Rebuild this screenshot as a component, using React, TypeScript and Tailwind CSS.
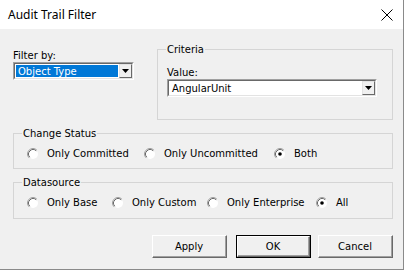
import React from 'react';

function Radio({ checked }: { checked?: boolean }) {
  return (
    <svg width="12" height="12" viewBox="0 0 12 12" className="shrink-0">
      <circle cx="6" cy="6" r="5" fill="#ffffff" />
      <path d="M2.11 9.89 A5.5 5.5 0 0 1 9.89 2.11" fill="none" stroke="#a0a0a0" />
      <path d="M2.82 9.18 A4.5 4.5 0 0 1 9.18 2.82" fill="none" stroke="#696969" />
      {checked && <circle cx="6" cy="6" r="1.8" fill="#000000" />}
    </svg>
  );
}

function RadioItem({ label, checked, width }: { label: string; checked?: boolean; width: string }) {
  return (
    <label className={`flex items-center gap-[8px] leading-[13px] ${width}`}>
      <Radio checked={checked} />
      <span>{label}</span>
    </label>
  );
}

function Group({ title, className, children }: { title: string; className?: string; children: React.ReactNode }) {
  return (
    <fieldset className={`border border-[#d5d5d5] ${className ?? ''}`}>
      <legend className="ml-[8px] px-[1px] leading-[13px]">{title}</legend>
      {children}
    </fieldset>
  );
}

function ComboArrow() {
  return (
    <div className="w-[13px] h-full flex items-center justify-center bg-[#f0f0f0] border-t border-l border-[#e3e3e3] border-r-[#696969] border-b-[#696969] border-r border-b">
      <svg width="7" height="4" viewBox="0 0 7 4">
        <path d="M0 0 H7 L3.5 4 Z" fill="#000" />
      </svg>
    </div>
  );
}

function Combo({ value, selected, width }: { value: string; selected?: boolean; width: string }) {
  return (
    <div className={`h-[18px] ${width} border-t border-l border-[#a0a0a0] border-r-white border-b-white border-r border-b`}>
      <div className="h-full flex border-t border-l border-[#696969] border-r-[#e3e3e3] border-b-[#e3e3e3] border-r border-b bg-white">
        <div className="flex-1 flex items-center p-[1px]">
          <div className={`flex-1 h-full flex items-center px-[2px] ${selected ? 'bg-[#0078d7] text-white' : ''}`}>
            {value}
          </div>
        </div>
        <ComboArrow />
      </div>
    </div>
  );
}

function Button({ label, isDefault }: { label: string; isDefault?: boolean }) {
  return (
    <div className={`w-[75px] h-[23px] ${isDefault ? 'border border-black' : ''}`}>
      <div className="h-full border-t border-l border-white border-r-[#696969] border-b-[#696969] border-r border-b">
        <div className="h-full flex items-center justify-center bg-[#f0f0f0] border-r border-b border-[#a0a0a0]">
          {label}
        </div>
      </div>
    </div>
  );
}

export default function App() {
  return (
    <div className="w-[407px] h-[271px] bg-white overflow-hidden">
      <div className="w-[404px] h-[270px] flex flex-col border-r border-b border-[#8a8a8a] font-['DejaVu_Sans',sans-serif] text-[10px] text-black">
        <div className="h-[29px] bg-white flex items-center justify-between pl-[8px] pr-[10px]">
          <span className="font-['Noto_Sans',sans-serif] text-[12px]">Audit Trail Filter</span>
          <svg width="12" height="12" viewBox="0 0 12 12">
            <path d="M0.5 0.5 L11.5 11.5 M11.5 0.5 L0.5 11.5" stroke="#000" strokeWidth="1" />
          </svg>
        </div>

        <div className="flex-1 bg-[#f0f0f0] pl-[13px] pr-[10px] pt-[14px]">
          <div className="flex">
            <div className="w-[144px] pt-[6px]">
              <div className="leading-[13px]">Filter by:</div>
              <Combo value="Object Type" selected width="w-[121px]" />
            </div>
            <Group title="Criteria" className="w-[236px] h-[77px]">
              <div className="pl-[9px] pr-[15px] pt-[10px]">
                <div className="leading-[13px]">Value:</div>
                <Combo value="AngularUnit" width="w-full" />
              </div>
            </Group>
          </div>

          <Group title="Change Status" className="w-[380px] mt-[7px]">
            <div className="flex pl-[13px] pt-[7px] pb-[8px]">
              <RadioItem label="Only Committed" width="w-[117px]" />
              <RadioItem label="Only Uncommitted" width="w-[130px]" />
              <RadioItem label="Both" checked width="w-[80px]" />
            </div>
          </Group>

          <Group title="Datasource" className="w-[380px] mt-[7px]">
            <div className="flex pl-[13px] pt-[7px] pb-[9px]">
              <RadioItem label="Only Base" width="w-[85px]" />
              <RadioItem label="Only Custom" width="w-[95px]" />
              <RadioItem label="Only Enterprise" width="w-[109px]" />
              <RadioItem label="All" checked width="w-[50px]" />
            </div>
          </Group>

          <div className="flex mt-[16px] pl-[139px]">
            <Button label="Apply" />
            <div className="ml-[9px]">
              <Button label="OK" isDefault />
            </div>
            <div className="ml-[7px]">
              <Button label="Cancel" />
            </div>
          </div>
        </div>
      </div>
    </div>
  );
}
